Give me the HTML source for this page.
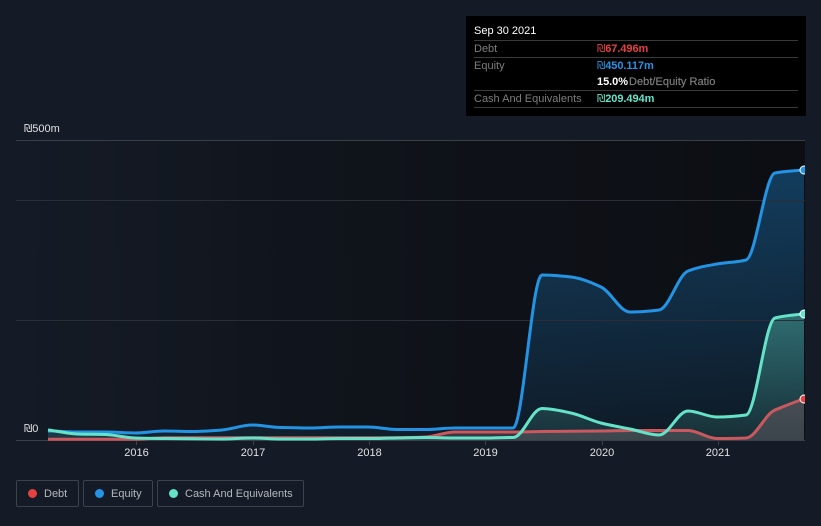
<!DOCTYPE html>
<html>
<head>
<meta charset="utf-8">
<style>
html,body{margin:0;padding:0;background:#151b26;}
#w{position:relative;width:821px;height:526px;overflow:hidden;background:#151b26;font-family:"Liberation Sans","DejaVu Sans",sans-serif;}
svg{position:absolute;left:0;top:0;}
text{font-family:"Liberation Sans","DejaVu Sans",sans-serif;font-size:11px;}
.s{font-family:"DejaVu Sans",sans-serif;font-size:10.5px;font-weight:normal;}
#tip{position:absolute;left:466px;top:16px;width:340px;height:100px;background:#000;}
.l{position:absolute;left:8px;width:324px;height:1px;background:#3a3a3a;}
.t{position:absolute;font-size:11px;line-height:14px;white-space:nowrap;}
.g{color:#7d7d7d}
.b{font-weight:bold;letter-spacing:-.05px}
.leg{position:absolute;top:480px;height:25px;border:1px solid #3d424c;border-radius:2px;}
.leg i{position:absolute;left:10.5px;top:7.5px;width:9px;height:9px;border-radius:50%;}
.leg span{position:absolute;top:6px;font-size:11px;line-height:14px;color:#b4b7bc;white-space:nowrap;}
</style>
</head>
<body>
<div id="w">
<svg width="821" height="526" viewBox="0 0 821 526">
<defs>
<linearGradient id="bg" x1="0" y1="0" x2="1" y2="0">
<stop offset="0" stop-color="#151b26"/>
<stop offset="0.45" stop-color="#0f131a"/>
<stop offset="1" stop-color="#0c0e13"/>
</linearGradient>
<linearGradient id="ge" gradientUnits="userSpaceOnUse" x1="0" y1="170" x2="0" y2="440">
<stop offset="0" stop-color="#1f8fe0" stop-opacity=".36"/>
<stop offset="1" stop-color="#1f8fe0" stop-opacity=".08"/>
</linearGradient>
<linearGradient id="gc" gradientUnits="userSpaceOnUse" x1="0" y1="314" x2="0" y2="440">
<stop offset="0" stop-color="#65e3c9" stop-opacity=".36"/>
<stop offset="1" stop-color="#65e3c9" stop-opacity=".1"/>
</linearGradient>
<linearGradient id="gd" gradientUnits="userSpaceOnUse" x1="0" y1="399" x2="0" y2="440">
<stop offset="0" stop-color="#e64141" stop-opacity=".26"/>
<stop offset="1" stop-color="#e8a0a0" stop-opacity=".2"/>
</linearGradient>
<clipPath id="cp"><rect x="16" y="130" width="789" height="320"/></clipPath>
</defs>
<rect x="16" y="140" width="789" height="300" fill="url(#bg)"/>

<g clip-path="url(#cp)">
<path id="da" fill="url(#gd)" d="M48,439.3 L135,439.3 C145,439.3 154,437.8 164,437.8 L339,437.8 C349,437.8 358,437.8 368,437.8 C378,437.8 387,437.8 397,437.6 C407,437.4 416,437.6 426,437 C436,436.2 445,432 455,432 C465,432 474,432 484,432 C494,432 503,432 513,432 C523,432 532,431.6 542,431.5 C552,431.4 561,431.4 571,431.3 C581,431.2 591,431.1 601,431 C611,430.9 620,430.5 630,430.5 C640,430.5 649,430.5 659,430.5 C669,430.5 678,430.5 688,430.5 C698,430.5 707,438.5 717,438.5 C727,438.5 736,438.5 746,438 C756,437.5 765,414 775,410 C785,406 794,402 804,399 L804,440 L48,440 Z"/>
<path fill="url(#ge)" d="M48,431 C58,431 67,432 77,432 C87,432 96,432 106,432 C116,432 125,433 135,433 C145,433 154,431 164,431 C174,431 183,431.5 193,431.5 C203,431.5 212,430.8 222,430 C232,429.2 242,425 252,425 C262,425 271,427.5 281,427.5 C291,427.5 300,428 310,428 C320,428 329,427 339,427 C349,427 358,427 368,427 C378,427 387,429.5 397,429.5 C407,429.5 416,429.5 426,429.5 C436,429.5 445,428 455,428 C465,428 474,428 484,428 C494,428 503,428 513,428 C523,428 532,275 542,275 C552,275 561,275.9 571,277 C581,278.1 591,282.2 601,287 C611,291.8 620,312 630,312 C640,312 649,311.3 659,310 C669,308.7 678,275 688,271 C698,267 707,265.7 717,264 C727,262.3 736,262.5 746,260 C756,257.5 765,174.9 775,173 C785,171.1 794,171 804,170 L804,440 L48,440 Z"/>
<path fill="url(#gc)" d="M48,430 C58,431 67,433.5 77,434 C87,434.4 96,434 106,434.5 C116,435 125,437.6 135,438 C145,438.3 154,438.4 164,438.5 C174,438.6 183,438.7 193,438.8 C203,438.9 212,439 222,439 C232,439 242,438 252,438 C262,438 271,439 281,439 C291,439 300,439 310,439 C320,439 329,438.5 339,438.5 C349,438.5 358,438.5 368,438.5 C378,438.5 387,438.2 397,438 C407,437.8 416,437.5 426,437.5 C436,437.5 445,438 455,438 C465,438 474,438 484,438 C494,438 503,437.5 513,437.5 C523,437.5 532,408.5 542,408.5 C552,408.5 561,410.9 571,413 C581,415.1 591,420.5 601,423 C611,425.5 620,427 630,429 C640,431 649,435 659,435 C669,435 678,411 688,411 C698,411 707,417 717,417 C727,417 736,416.3 746,415 C756,413.7 765,320.6 775,318 C785,315.4 794,315 804,314 L804,440 L48,440 Z"/>
</g>

<g fill="#3b3f47">
<rect x="16" y="140" width="789" height="1"/>
<rect x="16" y="200" width="789" height="1" fill="#2a2e36"/>
<rect x="16" y="320" width="789" height="1" fill="#2a2e36"/>
<rect x="16" y="440" width="789" height="1"/>
<rect x="136" y="440" width="1" height="5"/>
<rect x="253" y="440" width="1" height="5"/>
<rect x="369" y="440" width="1" height="5"/>
<rect x="485" y="440" width="1" height="5"/>
<rect x="602" y="440" width="1" height="5"/>
<rect x="718" y="440" width="1" height="5"/>
</g>

<g clip-path="url(#cp)" fill="none" stroke-width="3" stroke-linejoin="round">
<path stroke="#c9595f" d="M48,439.3 L135,439.3 C145,439.3 154,437.8 164,437.8 L339,437.8 C349,437.8 358,437.8 368,437.8 C378,437.8 387,437.8 397,437.6 C407,437.4 416,437.6 426,437 C436,436.2 445,432 455,432 C465,432 474,432 484,432 C494,432 503,432 513,432 C523,432 532,431.6 542,431.5 C552,431.4 561,431.4 571,431.3 C581,431.2 591,431.1 601,431 C611,430.9 620,430.5 630,430.5 C640,430.5 649,430.5 659,430.5 C669,430.5 678,430.5 688,430.5 C698,430.5 707,438.5 717,438.5 C727,438.5 736,438.5 746,438 C756,437.5 765,414 775,410 C785,406 794,402 804,399"/>
<path stroke="#2394e4" d="M48,431 C58,431 67,432 77,432 C87,432 96,432 106,432 C116,432 125,433 135,433 C145,433 154,431 164,431 C174,431 183,431.5 193,431.5 C203,431.5 212,430.8 222,430 C232,429.2 242,425 252,425 C262,425 271,427.5 281,427.5 C291,427.5 300,428 310,428 C320,428 329,427 339,427 C349,427 358,427 368,427 C378,427 387,429.5 397,429.5 C407,429.5 416,429.5 426,429.5 C436,429.5 445,428 455,428 C465,428 474,428 484,428 C494,428 503,428 513,428 C523,428 532,275 542,275 C552,275 561,275.9 571,277 C581,278.1 591,282.2 601,287 C611,291.8 620,312 630,312 C640,312 649,311.3 659,310 C669,308.7 678,275 688,271 C698,267 707,265.7 717,264 C727,262.3 736,262.5 746,260 C756,257.5 765,174.9 775,173 C785,171.1 794,171 804,170"/>
<path stroke="#65e3c9" d="M48,430 C58,431 67,433.5 77,434 C87,434.4 96,434 106,434.5 C116,435 125,437.6 135,438 C145,438.3 154,438.4 164,438.5 C174,438.6 183,438.7 193,438.8 C203,438.9 212,439 222,439 C232,439 242,438 252,438 C262,438 271,439 281,439 C291,439 300,439 310,439 C320,439 329,438.5 339,438.5 C349,438.5 358,438.5 368,438.5 C378,438.5 387,438.2 397,438 C407,437.8 416,437.5 426,437.5 C436,437.5 445,438 455,438 C465,438 474,438 484,438 C494,438 503,437.5 513,437.5 C523,437.5 532,408.5 542,408.5 C552,408.5 561,410.9 571,413 C581,415.1 591,420.5 601,423 C611,425.5 620,427 630,429 C640,431 649,435 659,435 C669,435 678,411 688,411 C698,411 707,417 717,417 C727,417 736,416.3 746,415 C756,413.7 765,320.6 775,318 C785,315.4 794,315 804,314"/>
<g stroke="#fff" stroke-width="1">
<circle cx="804" cy="399" r="4" fill="#e64141"/>
<circle cx="804" cy="170" r="4" fill="#2394e4"/>
<circle cx="804" cy="314" r="4" fill="#65e3c9"/>
</g>
</g>

<g fill="#dfe0e2">
<text x="24" y="132"><tspan class="s">₪</tspan>500m</text>
<text x="24" y="432"><tspan class="s">₪</tspan>0</text>
<g text-anchor="middle">
<text x="136.5" y="456">2016</text>
<text x="253" y="456">2017</text>
<text x="369.5" y="456">2018</text>
<text x="485.5" y="456">2019</text>
<text x="602" y="456">2020</text>
<text x="718" y="456">2021</text>
</g>
</g>
</svg>

<div id="tip">
<div class="t" style="left:8px;top:8px;color:#fff">Sep 30 2021</div>
<div class="l" style="top:24px"></div>
<div class="t g" style="left:8px;top:26px">Debt</div>
<div class="t b" style="left:131px;top:26px;color:#e64141"><span class="s">₪</span>67.496m</div>
<div class="l" style="top:41px"></div>
<div class="t g" style="left:8px;top:43px">Equity</div>
<div class="t b" style="left:131px;top:43px;color:#2394e4"><span class="s">₪</span>450.117m</div>
<div class="t b" style="left:131px;top:59px;color:#fff">15.0%</div>
<div class="t g" style="left:163px;top:59px;-webkit-text-stroke:.2px #7d7d7d;letter-spacing:.05px">Debt/Equity Ratio</div>
<div class="l" style="top:74px"></div>
<div class="t g" style="left:8px;top:76px">Cash And Equivalents</div>
<div class="t b" style="left:131px;top:76px;color:#65e3c9"><span class="s">₪</span>209.494m</div>
<div class="l" style="top:91px"></div>
</div>

<div class="leg" style="left:16px;width:61px"><i style="background:#e64141"></i><span style="left:27px">Debt</span></div>
<div class="leg" style="left:83px;width:68px"><i style="background:#2394e4"></i><span style="left:27px">Equity</span></div>
<div class="leg" style="left:157px;width:145px"><i style="background:#65e3c9"></i><span style="left:27px">Cash And Equivalents</span></div>
</div>
</body>
</html>
